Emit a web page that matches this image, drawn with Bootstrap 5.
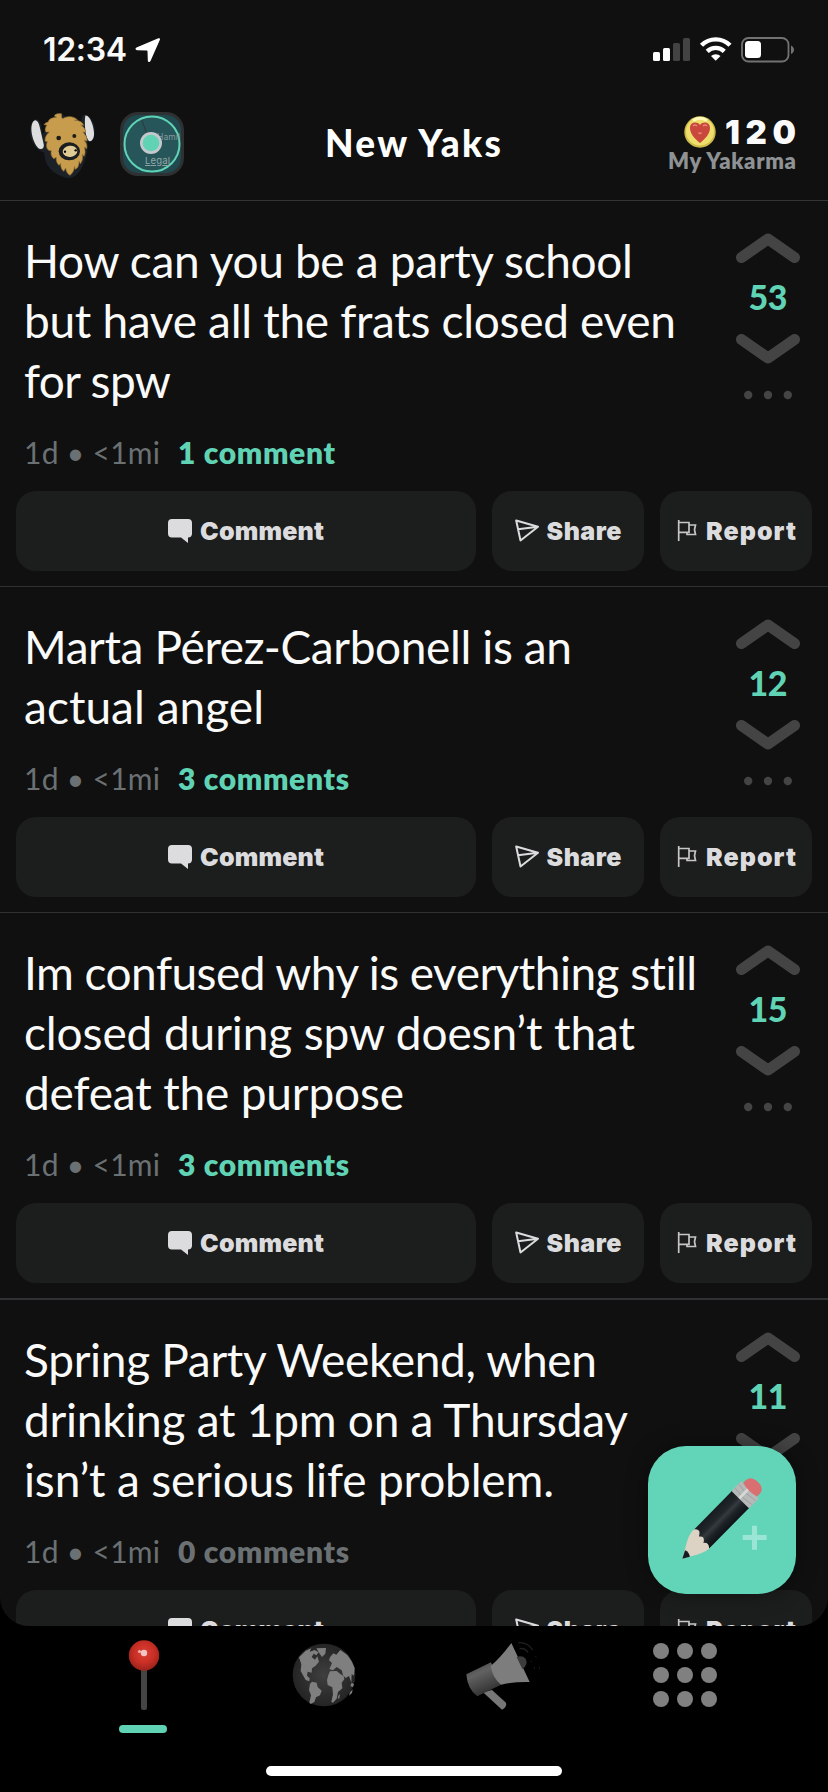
<!DOCTYPE html>
<html lang="en" data-bs-theme="dark">
<head>
<meta charset="utf-8">
<meta name="viewport" content="width=device-width, initial-scale=1">
<title>New Yaks</title>
<link rel="stylesheet" href="https://cdn.jsdelivr.net/npm/bootstrap@5.3.0/dist/css/bootstrap.min.css">
<style>
  body { width: 828px; height: 1792px; background: #000; font-family: Lato, "Liberation Sans", sans-serif; color: #fafafa; overflow: hidden; font-kerning: normal; }
  svg { display: block; flex: none; }
  .fit { white-space: nowrap; }
  .screen { height: 1626px; background: #101010; border-radius: 0 0 29px 29px; overflow: hidden; }
  .statusbar { height: 100px; padding: 35px 34px 0 43px; }
  .clock { font: 600 32px/30px Inter, sans-serif; }
  .topbar { height: 101px; border-bottom: 1px solid #333435; padding: 0 32px 0 30px; }
  .title-text { font-size: 37px; line-height: 44px; font-weight: 900; padding-top: 21px; }
  .side { width: 200px; }
  .karma-num { font: 900 33px/34px Inter, sans-serif; }
  .karma-label { font-size: 22px; line-height: 24px; font-weight: 800; color: #8f9294; }
  .yak { border-bottom: 1px solid #303132; }
  .yak-thick { border-bottom-width: 2px; }
  .yak-main { padding: 30px 28px 19px 24px; }
  .yak-text { font-size: 46px; line-height: 60px; }
  .yak-text .fit { display: block; width: max-content; }
  .meta { margin-top: 21px; font-size: 30px; line-height: 40px; color: #6b7173; }
  .meta .count { margin-left: 18px; font-weight: 800; color: #60d3b5; }
  .meta .none { color: #6b7173; }
  .votes { width: 64px; padding-top: 2px; }
  .score { font-size: 34px; line-height: 67px; padding-bottom: 4px; font-weight: 900; color: #60d3b5; }
  .dots { margin-top: 26px; }
  .actions { padding: 0 16px 15px; gap: 16px; }
  .act { height: 80px; border: 0; border-radius: 20px; background: #1c1d1d; color: #dcdcde; font: 900 25px/80px Inter, sans-serif; padding: 0; display: flex; align-items: center; justify-content: center; gap: 8px; }
  .act-main { width: 460px; }
  .act-side { width: 152px; }
  .tabs { height: 140px; padding: 0 54px 0 54px; }
  .tab { width: 180px; height: 110px; padding-top: 13px; }
  .underline { width: 48px; height: 8px; border-radius: 4px; background: #60d3b5; margin-top: 15px; margin-right: 2px; }
  .home { width: 296px; height: 10px; border-radius: 5px; background: #fff; }
  .compose { left: 648px; top: 1446px; width: 148px; height: 148px; border-radius: 38px; background: #62d4b7; box-shadow: 0 0 22px rgba(0,0,0,.4); }
</style>
</head>
<body>
<svg width="0" height="0" style="position:absolute">
  <defs>
    <radialGradient id="gBall" cx=".5" cy=".42" r=".6"><stop offset="0" stop-color="#da4036"/><stop offset=".55" stop-color="#c92f25"/><stop offset="1" stop-color="#98211b"/></radialGradient>
    <radialGradient id="gGlobe"><stop offset="0" stop-color="#3f3f3f"/><stop offset="1" stop-color="#242424"/></radialGradient>
    <linearGradient id="gHorn" x1="0" y1="0" x2=".45" y2="1"><stop offset="0" stop-color="#3c3c3c"/><stop offset=".4" stop-color="#626262"/><stop offset="1" stop-color="#303030"/></linearGradient>
    <linearGradient id="gPencil" x1="0" y1="0" x2="1" y2="0"><stop offset="0" stop-color="#171c20"/><stop offset=".35" stop-color="#20262a"/><stop offset=".5" stop-color="#343a3e"/><stop offset=".7" stop-color="#1c2226"/><stop offset="1" stop-color="#0e1317"/></linearGradient>
    <symbol id="up" viewBox="0 0 64 30"><path d="M5.500 24.500 32 6l26.500 18.500" fill="none" stroke="#444" stroke-width="11" stroke-linecap="round" stroke-linejoin="round"/></symbol>
    <symbol id="down" viewBox="0 0 64 30"><path d="M5.500 5.500 32 24l26.500-18.500" fill="none" stroke="#444" stroke-width="11" stroke-linecap="round" stroke-linejoin="round"/></symbol>
    <symbol id="more" viewBox="0 0 48 10"><g fill="#444"><circle cx="4.200" cy="5" r="4.200"/><circle cx="24" cy="5" r="4.200"/><circle cx="43.800" cy="5" r="4.200"/></g></symbol>
    <symbol id="bubble" viewBox="0 0 24 24"><path d="M4 0h16a4 4 0 0 1 4 4v11a4 4 0 0 1-4 3.500V24l-7-5.500H4a4 4 0 0 1-4-4V4a4 4 0 0 1 4-4z" fill="#dcdcde"/></symbol>
    <symbol id="send" viewBox="0 0 24 24"><path d="M1.200 1.500 23 7.800 5.500 21.500z M3 10.300 23 7.800" fill="none" stroke="#dcdcde" stroke-width="2" stroke-linejoin="round"/></symbol>
    <symbol id="flag" viewBox="0 0 22 22"><path d="M2.700 0v21M2.700 2.500H13v9.800H2.700M13 5h6.500l-1 4.800 1 4.700H11v-2" fill="none" stroke="#c6c6c8" stroke-width="1.700"/></symbol>
  </defs>
</svg>

<main class="screen d-flex flex-column">
  <div class="statusbar flex-shrink-0 d-flex justify-content-between align-items-start">
    <div class="d-flex align-items-center">
      <span class="clock fit" data-width="84">12:34</span>
      <svg width="26" height="26" viewBox="0 0 26 26" class="ms-2"><path d="M24.300 1.200c.6.200.9.700.7 1.400L15.500 24c-.8 1.700-2.600 1.300-2.700-.4l-.3-9.300c0-.5-.3-.8-.8-.8L2 13.200c-1.800-.1-2-2-.5-2.700L23.300 1.200c.4-.1.700-.1 1 0z" fill="#fff"/></svg>
    </div>
    <div class="d-flex align-items-center" style="padding-top:2px">
      <svg width="142" height="26" viewBox="0 0 142 26">
        <rect x="1" y="15" width="7" height="9" rx="1.500" fill="#fff"/><rect x="11" y="11" width="7" height="13" rx="1.500" fill="#fff"/><rect x="21" y="6" width="7" height="18" rx="1.500" fill="#434343"/><rect x="31" y="1" width="7" height="23" rx="1.500" fill="#434343"/>
        <g fill="none" stroke="#fff" stroke-width="4.400"><path d="M49.500 8.300a20 20 0 0 1 28.500 0"/><path d="M55.200 14.300a12.500 12.500 0 0 1 17.100 0"/></g><path d="M63.700 23.800 59 19a7 7 0 0 1 9.500 0z" fill="#fff"/>
        <rect x="90" y="1" width="46.500" height="23.500" rx="6.500" fill="none" stroke="#727272" stroke-width="1.800"/><rect x="93" y="4" width="16" height="17" rx="3.500" fill="#fff"/><path d="M139 8.500c4 1.800 4 7 0 8.500z" fill="#727272"/>
      </svg>
    </div>
  </div>

  <header class="topbar flex-shrink-0 d-flex justify-content-between align-items-start">
    <div class="side d-flex align-items-start">
      <svg width="66" height="68" viewBox="90 338 198 204" style="margin-top:12px">
        <path d="M106 360c-14 4-18 35-15 50 6 24 22 45 42 50 0 35 22 67 75 77 26-3 41-34 47-57 8-15 8-32 8-53 22-5 28-42 14-62-10-21-25-25-31-13l-4 20c-12-15-29-20-47-21l-11-10c-18 2-20 15-19 24-17 4-27 15-30 28-2 7-6 8-8 14-1-24-4-48-21-47z" fill="#1b2126"/>
        <path d="M101 365c7-6 15 2 18 17l12 52c3 14-8 20-17 11-18-18-27-66-13-80zM256 349c15-3 28 40 26 59-2 19-15 25-21 7-6-13-8-49-5-66z" fill="#dedede"/>
        <path d="M184 343c1 6-1 10 4 15 12-8 31-9 44 3l-9 2c15 0 24 5 28 15l-9-1c11 6 14 15 15 22l-8-1c7 9 13 17 12 27l-9-3c7 8 10 15 8 26l-7-5c3 12 3 20-1 28l-5-6c2 15-1 21-6 28l-4-8c0 15-4 21-11 25l-2-9c-2 12-6 21-14 27-8-5-11-11-13-22l-6 10c-8-7-9-15-9-24l-5 6c-7-7-9-15-8-24l-8 4c-8-8-9-16-7-24l-8-1c-7-6-8-15-4-26l-7-2c1-16 7-21 13-27h-10c-4-5-2-14 3-21l-9-1c4-5 8-7 13-8 1-7 8-13 25-14l-6-3c-2-4 5-8 12-8z" fill="#c79c4c" stroke="#9b7838" stroke-width="2"/>
        <circle cx="176" cy="416" r="7" fill="#1b1c1a"/><circle cx="223" cy="410" r="6" fill="#1b1c1a"/>
        <ellipse cx="208" cy="456" rx="32" ry="27" fill="#1b1e20"/><ellipse cx="210" cy="456" rx="22" ry="17" fill="#e0cb94" transform="rotate(-6 210 456)"/><circle cx="195" cy="457" r="3.500"/><circle cx="227" cy="453" r="3.500"/>
      </svg>
      <svg width="64" height="64" viewBox="0 0 64 64" style="margin:12px 0 0 24px">
        <rect width="64" height="64" rx="18" fill="#2e3031"/><rect x="3" y="3" width="58" height="58" rx="15" fill="#20484f"/>
        <circle cx="32" cy="32" r="27.500" fill="#27565a" stroke="#60d3b5" stroke-width="2"/><path d="M22 8l5 15" stroke="#2e393c"/>
        <text x="37" y="28" font-family="Inter,sans-serif" font-size="8.500" fill="#849a9d" textLength="23">Hamil</text>
        <text x="25" y="52" font-family="Inter,sans-serif" font-size="9.500" fill="#91a7a8" textLength="25" text-decoration="underline">Legal</text>
        <circle cx="31" cy="31" r="11" fill="#c5c8cc"/><circle cx="31" cy="31" r="8.300" fill="#60d3b5"/>
      </svg>
    </div>
    <h1 class="title-text m-0"><span class="fit" data-width="176">New Yaks</span></h1>
    <div class="side d-flex flex-column align-items-end" style="padding-top:15px">
      <div class="d-flex align-items-center">
        <svg width="32" height="32" viewBox="0 0 32 32" style="margin-right:9px"><circle cx="16" cy="16" r="15.700" fill="#cdbb49"/><circle cx="16" cy="15.500" r="14" fill="#eede6c"/><path d="M9 4.500a13 13 0 0 1 14 0" stroke="#fff9ba" stroke-width="3" fill="none"/><path d="M16 27C11 23 6 18 6 12c0-6 7-7 10-3 3-4 10-3 10 3 0 6-5 11-10 15z" fill="#c9473c"/><path d="M9 10q2-2 4 0M19 10q2-2 4 0M14.500 16.500q1.500 2 3 0" stroke="#e58878" fill="none" stroke-width="1.400"/></svg>
        <span class="karma-num fit" data-width="71">120</span>
      </div>
      <span class="karma-label fit" data-width="128">My Yakarma</span>
    </div>
  </header>

  <section id="feed" class="flex-grow-1 overflow-hidden"></section>
</main>

<a class="compose position-absolute" role="button" aria-label="Compose">
  <svg width="148" height="148" viewBox="702 438 444 444">
    <g transform="translate(805 776) rotate(44.500)">
      <path d="M0 0-16-29Q-37-63-37-82L-32-105H32L37-80Q34-54 14-24z" fill="#ddd3c4"/>
      <path d="M0 0-12-24Q0-29 12-20z" fill="#171b1f"/>
      <path d="M-36-250-36-88Q-22-104-11-82 1-98 12-78 22-92 36-78V-250z" fill="url(#gPencil)"/>
      <rect x="-37" y="-290" width="74" height="42" rx="4" fill="#b7b8b8"/><path d="M-35-278Q0-270 35-278M-35-262Q0-254 35-262" fill="none" stroke="#949696" stroke-width="2"/><path d="M-5-289v40" stroke="#d7d8d8" stroke-width="8"/>
      <path d="M-29-290V-301Q-28-321-5-323H8Q29-320 29-301V-290Q0-282-29-290z" fill="#d96f70"/>
    </g>
    <path d="M1014 677h15v28h29v15h-29v29h-15v-29h-28v-15h28z" fill="#9be5d5"/>
  </svg>
</a>

<nav class="tabs d-flex">
  <div class="tab d-flex flex-column align-items-center">
    <svg width="34" height="71" viewBox="0 0 34 71"><rect x="14" y="28" width="6" height="43" rx="2.500" fill="#444"/><circle cx="17" cy="16.500" r="15.200" fill="url(#gBall)"/><g fill="#fff"><circle cx="17" cy="14" r="3.200" opacity=".7"/><circle cx="12.500" cy="12.500" r="1.600" opacity=".6"/></g></svg>
    <div class="underline"></div>
  </div>
  <div class="tab d-flex flex-column align-items-center" style="padding-top:17px">
    <svg width="64" height="64" viewBox="876 248 192 192"><circle cx="972" cy="344" r="94" fill="url(#gGlobe)"/>
      <g fill="#7f7f7f"><path d="M897 291 917 271 934 264 929 274 944 269 956 276 949 285 941 280 935 290 945 298 952 288 957 304 947 316 936 324 935 337 923 334 921 346 929 354 928 363 917 359 902 332 904 312zM949 264 978 263 976 280 966 290 959 280z"/><path d="M936 364 950 367 953 380 965 391 960 405 948 411 943 425 932 431 928 427 933 405 927 389 930 370z"/><path d="M990 291 1000 279 1009 283 1021 269 1042 284 1055 303 1064 323 1062 346 1055 341 1054 367 1047 347 1037 353 1029 345 1025 330 1010 320 999 330 988 326 996 308 987 300z"/><path d="M990 333 1010 332 1021 341 1031 347 1033 357 1025 367 1027 384 1014 395 1010 415 999 427 994 425 999 402 997 381 983 374 981 359 985 344zM1020 401l-2 13-5 1 2-9zM1055 367l7 5-3 8-8-3zM1058 387l-2 11-9 8 3-10z"/></g></svg>
  </div>
  <div class="tab d-flex flex-column align-items-center" style="padding-top:14px">
    <svg width="78" height="72" viewBox="154 240 234 216">
      <path d="M208 397 235 390 277 428Q281 440 265 449z" fill="#777"/><path d="M158 343 232 307 262 374 191 409Q161 388 158 343z" fill="url(#gHorn)"/><path d="M293 249 348 366Q298 365 262 374 237 354 231 318 262 292 293 249z" fill="#7d7d7d"/><path d="M309 292Q324 284 336 296 345 314 326 327z" fill="#3c3c3c"/><path d="M314 248Q342 246 357 270M318 266Q334 263 343 278" fill="none" stroke="#202020" stroke-width="4"/><path d="M364 288l5 4M350 302l5 3M377 320v8M362 320v8" stroke="#171717" stroke-width="3"/>
    </svg>
  </div>
  <div class="tab d-flex flex-column align-items-center" style="padding:17px 0 0 2px">
    <svg width="64" height="64" viewBox="0 0 64 64" fill="#808080"><circle cx="8" cy="8" r="8"/><circle cx="32" cy="8" r="8"/><circle cx="56" cy="8" r="8"/><circle cx="8" cy="32" r="8"/><circle cx="32" cy="32" r="8"/><circle cx="56" cy="32" r="8"/><circle cx="8" cy="56" r="8"/><circle cx="32" cy="56" r="8"/><circle cx="56" cy="56" r="8"/></svg>
  </div>
</nav>
<div class="home mx-auto"></div>

<script src="https://cdn.jsdelivr.net/npm/bootstrap@5.3.0/dist/js/bootstrap.bundle.min.js"></script>
<script>
  // Each line of a yak carries the width it is set to.
  const yaks = [
    { lines: [['How can you be a party school', 609], ['but have all the frats closed even', 652], ['for spw', 147]], score: 53, count: '1 comment', width: 157 },
    { lines: [['Marta Pérez-Carbonell is an', 548], ['actual angel', 240]], score: 12, count: '3 comments', width: 171 },
    { lines: [['Im confused why is everything still', 674], ['closed during spw doesn’t that', 611], ['defeat the purpose', 380]], score: 15, count: '3 comments', width: 171, thick: true },
    { lines: [['Spring Party Weekend, when', 573], ['drinking at 1pm on a Thursday', 604], ['isn’t a serious life problem.', 530]], score: 11, count: '0 comments', width: 171, none: true }
  ];
  const icon = (id, w, h) => `<svg width="${w}" height="${h}"><use href="#${id}"/></svg>`;
  document.getElementById('feed').innerHTML = yaks.map(y => `
    <article class="yak ${y.thick ? 'yak-thick' : ''}">
      <div class="yak-main d-flex justify-content-between align-items-start">
        <div>
          <div class="yak-text">${y.lines.map(([t, w]) => `<span class="fit" data-width="${w}">${t}</span>`).join('')}</div>
          <div class="meta d-flex"><span class="fit" data-width="136">1d • &lt;1mi</span><span class="count fit ${y.none ? 'none' : ''}" data-width="${y.width}">${y.count}</span></div>
        </div>
        <div class="votes d-flex flex-column align-items-center">
          ${icon('up', 64, 30)}<div class="score"><span class="fit" data-width="39">${y.score}</span></div>${icon('down', 64, 30)}
          <div class="dots">${icon('more', 48, 10)}</div>
        </div>
      </div>
      <div class="actions d-flex">
        <button class="act act-main">${icon('bubble', 24, 24)}<span class="fit" data-width="124">Comment</span></button>
        <button class="act act-side">${icon('send', 24, 24)}<span class="fit" data-width="75">Share</span></button>
        <button class="act act-side">${icon('flag', 22, 22)}<span class="fit" data-width="90">Report</span></button>
      </div>
    </article>`).join('');

  // Track the letters so that every label fills its set width.
  document.querySelectorAll('.fit').forEach(el => {
    const natural = el.getBoundingClientRect().width;
    const gap = (el.dataset.width - natural) / (el.textContent.length - 1);
    el.style.letterSpacing = gap.toFixed(3) + 'px';
    el.style.marginRight = (-gap).toFixed(3) + 'px';
  });
</script>
</body>
</html>
